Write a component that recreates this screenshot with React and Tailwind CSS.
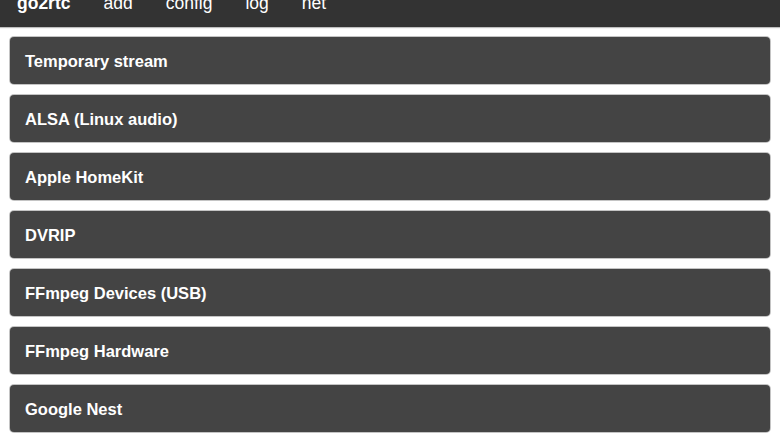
export default function App() {
  const items = [
    "Temporary stream",
    "ALSA (Linux audio)",
    "Apple HomeKit",
    "DVRIP",
    "FFmpeg Devices (USB)",
    "FFmpeg Hardware",
    "Google Nest",
  ];
  return (
    <div className="min-h-[439px] bg-white font-['Liberation_Sans',Arial,sans-serif] overflow-hidden">
      <header className="h-[27px] bg-[#333333] overflow-hidden shadow-[0_1px_1px_rgba(0,0,0,0.25)]">
        <nav className="flex gap-[33px] pl-[17px] -mt-[6px] text-[17.5px] leading-[18px] text-white">
          <span className="font-bold">go2rtc</span>
          <span>add</span>
          <span>config</span>
          <span>log</span>
          <span>net</span>
        </nav>
      </header>
      <main className="flex flex-col gap-[11px] px-[10px] pt-[10px]">
        {items.map((t) => (
          <div
            key={t}
            className="h-[47px] flex items-center px-[15px] pt-[1px] rounded-[4px] bg-[#444444] ring-1 ring-[#c4c4c4] text-white text-[16.5px] font-bold"
          >
            {t}
          </div>
        ))}
      </main>
    </div>
  );
}
